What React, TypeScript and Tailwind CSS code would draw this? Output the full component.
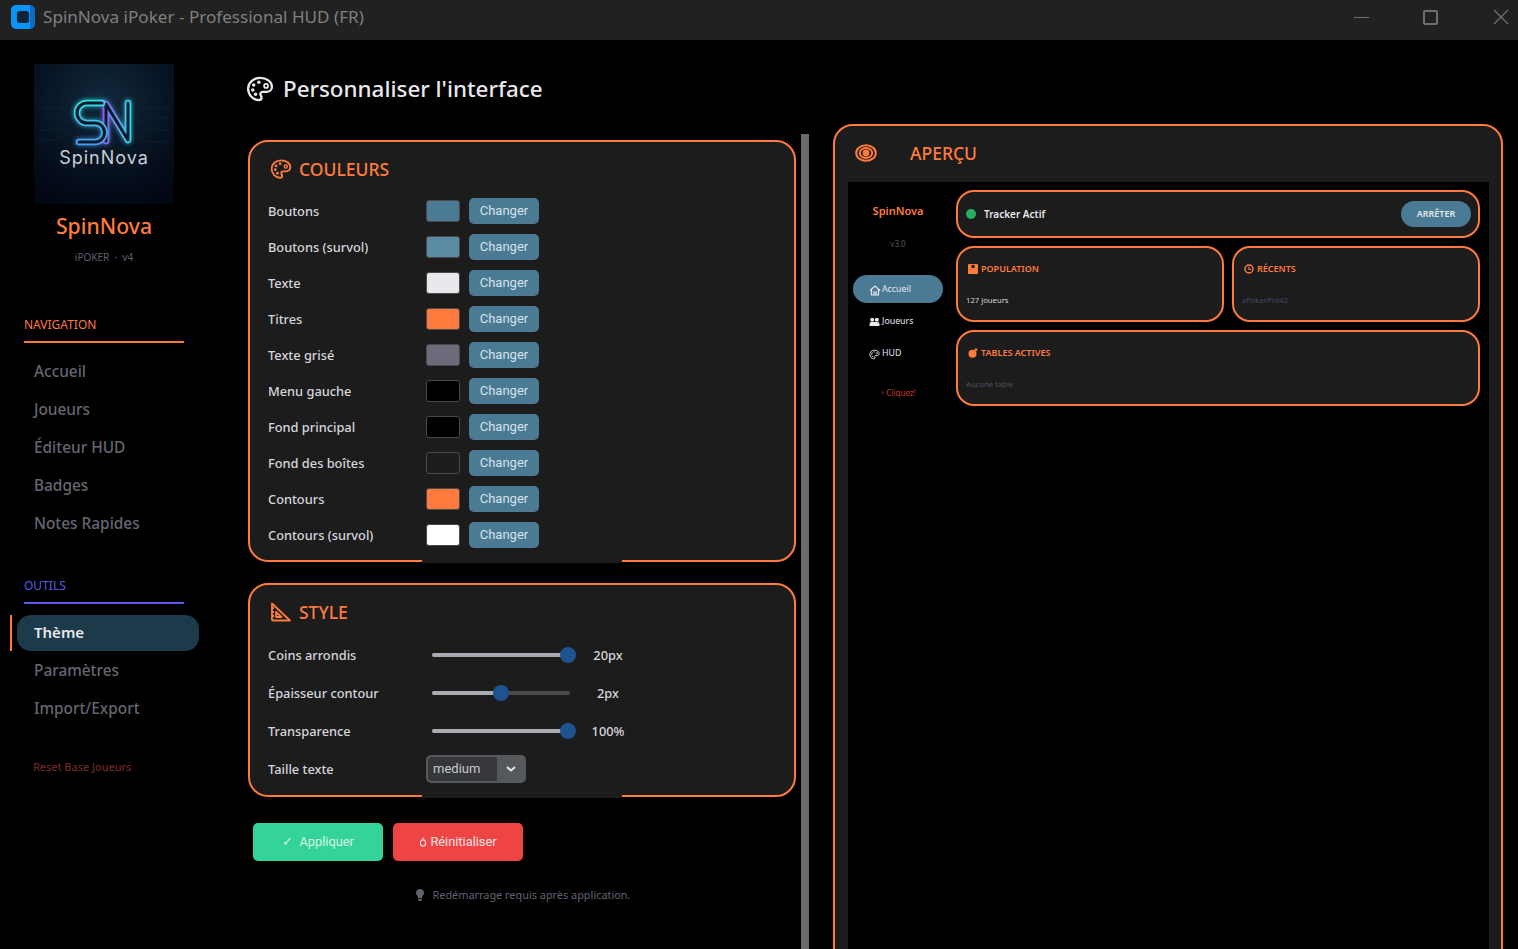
import React from 'react';

const colorRows = [
    { label: 'Boutons', swatch: 'bg-[#4a7a94]' },
    { label: 'Boutons (survol)', swatch: 'bg-[#5a8aa4]' },
    { label: 'Texte', swatch: 'bg-[#e8e8ec]' },
    { label: 'Titres', swatch: 'bg-[#ff7b3d]' },
    { label: 'Texte grisé', swatch: 'bg-[#6b6b7b]' },
    { label: 'Menu gauche', swatch: 'bg-[#000000]' },
    { label: 'Fond principal', swatch: 'bg-[#000000]' },
    { label: 'Fond des boîtes', swatch: 'bg-[#1c1c1c]' },
    { label: 'Contours', swatch: 'bg-[#ff7b3d]' },
    { label: 'Contours (survol)', swatch: 'bg-[#ffffff]' },
];

function PaletteIcon({ size, color, width = 2 }: { size: number; color: string; width?: number }) {
    return (
        <svg width={size} height={size} viewBox="0 0 24 24" fill="none" stroke={color} strokeWidth={width} className="shrink-0">
            <path d="M12 2.5C6.4 2.5 1.8 6.6 1.8 11.8S6.2 21.5 11 21.5c1.5 0 2.3-.9 2.3-2 0-1.5-1-2-1-3.2 0-1 .8-1.8 2-1.8h3.2c2.8 0 4.7-1.9 4.7-4.3 0-4.6-4.6-7.7-10.2-7.7z" />
            <circle cx="17.2" cy="9.4" r="1.7" strokeWidth={width * 0.75} />
            <circle cx="11" cy="6.2" r="1.5" fill={color} stroke="none" />
            <circle cx="6.6" cy="8.6" r="1.5" fill={color} stroke="none" />
            <circle cx="5.8" cy="12.8" r="1.5" fill={color} stroke="none" />
            <circle cx="8.2" cy="16.6" r="1.5" fill={color} stroke="none" />
        </svg>
    );
}

function Logo() {
    return (
        <svg width="140" height="140" viewBox="0 0 140 140" className="block">
            <defs>
                <radialGradient id="logoBg" cx="50%" cy="25%" r="80%">
                    <stop offset="0%" stopColor="#10293c" />
                    <stop offset="55%" stopColor="#081423" />
                    <stop offset="100%" stopColor="#020713" />
                </radialGradient>
                <linearGradient id="tubeS" gradientUnits="userSpaceOnUse" x1="0" y1="36" x2="0" y2="80">
                    <stop offset="0%" stopColor="#2fe6e0" />
                    <stop offset="100%" stopColor="#4a9cf5" />
                </linearGradient>
                <linearGradient id="tubeN" gradientUnits="userSpaceOnUse" x1="70" y1="0" x2="96" y2="0">
                    <stop offset="0%" stopColor="#8a62f0" />
                    <stop offset="100%" stopColor="#2fd8ea" />
                </linearGradient>
                <filter id="glow" x="-30%" y="-30%" width="160%" height="160%">
                    <feGaussianBlur stdDeviation="2.2" />
                </filter>
            </defs>
            <rect width="140" height="140" fill="url(#logoBg)" />
            <g stroke="#143040" strokeWidth="0.6" fill="none" opacity="0.7">
                <path d="M4 44h24l8 8h2M8 54h20l6 6h2M6 66h30M4 76h22l8-6h2M136 44h-24l-8 8h-2M134 54h-22l-6 6h-2M136 66h-32M134 78h-22l-8-6h-2" />
            </g>
            <g fill="none" strokeLinecap="round" strokeLinejoin="round">
                <path d="M72 77V40L94 76V39" stroke="url(#tubeN)" strokeWidth="8" filter="url(#glow)" opacity="0.6" />
                <path d="M68 39H53a10 10 0 0 0 0 20h8a9.5 9.5 0 0 1 0 19H45" stroke="url(#tubeS)" strokeWidth="8" filter="url(#glow)" opacity="0.6" />
                <path d="M72 77V40L94 76V39" stroke="url(#tubeN)" strokeWidth="6.6" />
                <path d="M72 77V40L94 76V39" stroke="#0a1a2c" strokeWidth="3" />
                <path d="M68 39H53a10 10 0 0 0 0 20h8a9.5 9.5 0 0 1 0 19H45" stroke="url(#tubeS)" strokeWidth="6.6" />
                <path d="M68 39H53a10 10 0 0 0 0 20h8a9.5 9.5 0 0 1 0 19H45" stroke="#0a1a2c" strokeWidth="3" />
            </g>
            <text x="70" y="100" textAnchor="middle" fill="#c9ced6" fontSize="18" fontWeight="400" letterSpacing="1" fontFamily="Inter, sans-serif">
                SpinNova
            </text>
        </svg>
    );
}

function TitleBar() {
    return (
        <div className="flex h-10 shrink-0 items-center bg-[#212121] pb-[6px]">
            <div className="ml-[11px] flex h-6 w-6 items-center justify-center rounded-[5px] bg-[linear-gradient(90deg,#0a94f5_78%,#0a6cc8_78%)]">
                <div className="mr-[1px] h-[12px] w-[12px] rounded-[3px] bg-[#0f2238]"></div>
            </div>
            <span className="ml-2 text-[17.1px] text-[#7f7f7f]">SpinNova iPoker - Professional HUD (FR)</span>
            <div className="ml-auto flex items-center">
                <div className="mr-[54px] h-px w-[15px] bg-[#6e6e6e]"></div>
                <div className="mr-[55px] h-[15px] w-[15px] rounded-[2px] border-2 border-[#6e6e6e]"></div>
                <svg width="16" height="16" viewBox="0 0 16 16" className="mr-[9px]">
                    <path d="M1 1l14 14M15 1L1 15" stroke="#6e6e6e" strokeWidth="1.3" />
                </svg>
            </div>
        </div>
    );
}

function NavItem({ label, active }: { label: string; active?: boolean }) {
    if (active) {
        return (
            <div className="relative ml-[17px] flex h-9 w-[182px] items-center rounded-[14px] bg-[#1c3a4a] pb-[2px] pl-[17px] text-[15px] font-semibold text-[#e8e8ec]">
                <div className="absolute -left-[7px] top-0 h-9 w-[2px] bg-[#ff7b3d]"></div>
                {label}
            </div>
        );
    }
    return <div className="flex h-9 items-center pl-[34px] text-[15.4px] font-medium text-[#666672]">{label}</div>;
}

function Sidebar() {
    return (
        <div className="flex w-[222px] shrink-0 flex-col">
            <div className="ml-[34px] mt-6 w-[140px]">
                <Logo />
            </div>
            <div className="ml-[34px] mt-[8px] w-[140px] text-center text-[21.2px] font-medium leading-7 text-[#ff7b3d]">SpinNova</div>
            <div className="ml-[34px] mt-[9px] w-[140px] text-center text-[10px] leading-4 text-[#5c6170]">iPOKER &nbsp;·&nbsp; v4</div>

            <div className="ml-6 mt-[52px] w-40 border-b-2 border-[#ff7b3d] pb-2 text-xs leading-4 text-[#ff7b3d]">NAVIGATION</div>
            <div className="mt-[11px] flex flex-col gap-[2px]">
                {['Accueil', 'Joueurs', 'Éditeur HUD', 'Badges', 'Notes Rapides'].map((item) => (
                    <NavItem key={item} label={item} />
                ))}
            </div>

            <div className="ml-6 mt-[36px] w-40 border-b-2 border-[#5b5be6] pb-2 text-xs leading-4 text-[#5b5be6]">OUTILS</div>
            <div className="mt-[11px] flex flex-col gap-[2px]">
                <NavItem label="Thème" active />
                <NavItem label="Paramètres" />
                <NavItem label="Import/Export" />
            </div>
            <div className="ml-[33px] mt-[32px] text-[11px] leading-4 text-[#7a2e2a]">Reset Base Joueurs</div>
        </div>
    );
}

function ColorRow({ label, swatch }: { label: string; swatch: string }) {
    return (
        <div className="flex h-[26px] items-center">
            <div className="w-[158px] pt-[2px] text-[12.8px] font-medium text-[#d6d6dc]">{label}</div>
            <div className={`h-[22px] w-[34px] rounded-[3px] border border-[#4a4a4a] ${swatch}`}></div>
            <button className="ml-[9px] h-[26px] w-[70px] rounded-[5px] bg-[#4a7a94] font-['Roboto'] text-[13px] text-[#d6e2e8]">Changer</button>
        </div>
    );
}

function Notch() {
    // bande sans contour en bas des boites
    return <div className="absolute -bottom-[3px] left-[172px] h-[5px] w-[200px] bg-[#1c1c1c]"></div>;
}

function StyleIcon() {
    return (
        <svg width="22" height="22" viewBox="0 0 22 22" fill="none" stroke="#ff7b3d" strokeWidth="1.8" strokeLinejoin="round">
            <path d="M2 2.5l18 17H3a1 1 0 0 1-1-1z" />
            <path d="M6 11l5.5 5H6z" />
            <path d="M2 7h2M2 11h2M2 15h2" />
        </svg>
    );
}

function SliderRow({ label, value, percent }: { label: string; value: string; percent: number }) {
    return (
        <div className="flex h-7 items-center">
            <div className="w-[164px] pt-[2px] text-[12.8px] font-medium text-[#d6d6dc]">{label}</div>
            <div className="relative h-[4px] w-[138px] rounded-full bg-[#4a4a4a]">
                <div className="h-full rounded-full bg-[#a8abb0]" style={{ width: `${percent}%` }}></div>
                <div className="absolute -top-[6px] h-4 w-4 rounded-full bg-[#1f5390]" style={{ left: `${(percent / 100) * 134 - 6}px` }}></div>
            </div>
            <div className="ml-[18px] w-[40px] pt-[2px] text-center text-[12.8px] font-medium text-[#d6d6dc]">{value}</div>
        </div>
    );
}

function LeftColumn() {
    return (
        <div className="w-[555px] shrink-0 pt-[35px]">
            <div className="flex h-7 items-center text-[#e8e8ec]">
                <PaletteIcon size={28} color="#e8e8ec" />
                <span className="ml-[9px] text-[22.4px] font-medium">Personnaliser l'interface</span>
            </div>

            <div className="relative ml-[2px] mt-[37px] h-[422px] w-[548px] rounded-[20px] border-2 border-[#ff7b3d] bg-[#1c1c1c] pl-[18px] pt-[15px]">
                <div className="flex h-6 items-center gap-[6px] pl-[2px] text-[17.5px] font-medium text-[#ff7b3d]">
                    <PaletteIcon size={22} color="#ff7b3d" />
                    <span className="ml-[1px]">COULEURS</span>
                </div>
                <div className="mt-[17px] flex flex-col gap-[10px]">
                    {colorRows.map((row) => (
                        <ColorRow key={row.label} label={row.label} swatch={row.swatch} />
                    ))}
                </div>
                <Notch />
            </div>

            <div className="relative ml-[2px] mt-[21px] h-[214px] w-[548px] rounded-[20px] border-2 border-[#ff7b3d] bg-[#1c1c1c] pl-[18px] pt-[15px]">
                <div className="flex h-6 items-center gap-[7px] pl-[2px] text-[17.5px] font-medium text-[#ff7b3d]">
                    <StyleIcon />
                    <span>STYLE</span>
                </div>
                <div className="mt-[17px] flex flex-col gap-[10px]">
                    <SliderRow label="Coins arrondis" value="20px" percent={100} />
                    <SliderRow label="Épaisseur contour" value="2px" percent={50} />
                    <SliderRow label="Transparence" value="100%" percent={100} />
                    <div className="flex h-7 items-center">
                        <div className="w-[158px] pt-[2px] text-[12.8px] font-medium text-[#d6d6dc]">Taille texte</div>
                        <div className="flex h-7 w-[100px] overflow-hidden rounded-[5px] border-2 border-[#55595c] bg-[#55595c]">
                            <div className="flex-1 rounded-l-[3px] bg-[#35373a] pl-[5px] font-['Roboto'] text-[13px] leading-6 text-[#c8c8ce]">medium</div>
                            <div className="flex w-[27px] items-center justify-center">
                                <svg width="10" height="6" viewBox="0 0 10 6" fill="none">
                                    <path d="M1 1l4 3.5L9 1" stroke="#e4e4e4" strokeWidth="2" />
                                </svg>
                            </div>
                        </div>
                    </div>
                </div>
                <Notch />
            </div>

            <div className="ml-[7px] mt-[26px] flex gap-[10px] font-['Roboto'] text-[12.8px]">
                <button className="h-[38px] w-[130px] rounded-[5px] bg-[#34d399] text-[#d6f5e8]">✓&nbsp; Appliquer</button>
                <button className="flex h-[38px] w-[130px] items-center justify-center gap-[3px] rounded-[5px] bg-[#ef4444] text-[#fde4e4]">
                    <svg width="8" height="10" viewBox="0 0 8 10" fill="none" stroke="#fde4e4" strokeWidth="1.1">
                        <ellipse cx="4" cy="6" rx="2.6" ry="3.2" />
                        <path d="M4 0.5v3" />
                    </svg>
                    Réinitialiser
                </button>
            </div>

            <div className="ml-[1px] mt-[26px] flex w-[552px] items-center justify-center gap-[7px] text-[10.9px] text-[#5f6470]">
                <svg width="10" height="12" viewBox="0 0 10 12" fill="#5f6470">
                    <path d="M5 0a4 4 0 0 0-2.2 7.3V9h4.4V7.3A4 4 0 0 0 5 0zM3 9.8h4V11l-1 1H4l-1-1z" />
                </svg>
                <span>Redémarrage requis après application.</span>
            </div>
        </div>
    );
}

function MiniCard({ title, icon, text, textColor, className }: { title: string; icon: React.ReactNode; text: string; textColor: string; className: string }) {
    return (
        <div className={`h-[76px] rounded-[18px] border-2 border-[#ff7b3d] bg-[#1c1c1c] pl-2 ${className}`}>
            <div className="mt-[14px] flex h-[14px] items-center gap-[3px] pl-[2px] text-[9px] font-semibold text-[#ff7b3d]">
                {icon}
                <span>{title}</span>
            </div>
            <div className={`mt-[18px] text-[7.7px] leading-3 ${textColor}`}>{text}</div>
        </div>
    );
}

function Preview() {
    const box = (
        <svg width="10" height="10" viewBox="0 0 10 10" fill="#ff7b3d">
            <path d="M0 1a1 1 0 0 1 1-1h8a1 1 0 0 1 1 1v8a1 1 0 0 1-1 1H1a1 1 0 0 1-1-1zM3.5 1v3h3V1z" fillRule="evenodd" />
        </svg>
    );
    const clock = (
        <svg width="10" height="10" viewBox="0 0 10 10" fill="none" stroke="#ff7b3d" strokeWidth="1.5">
            <circle cx="5" cy="5" r="4" />
            <path d="M5 2.5V5.5H7" strokeWidth="1.1" />
        </svg>
    );
    const blob = (
        <svg width="10" height="10" viewBox="0 0 10 10" fill="#ff7b3d">
            <circle cx="4.5" cy="5.8" r="4" />
            <circle cx="8" cy="1.8" r="1.4" />
        </svg>
    );
    return (
        <div className="ml-6 mt-[84px] h-[900px] w-[670px] shrink-0 rounded-[20px] border-2 border-[#ff7b3d] bg-[#1c1c1c]">
            <div className="flex h-[56px] items-center pb-[2px] pl-5 text-[#ff7b3d]">
                <svg width="22" height="18" viewBox="0 0 22 18" fill="none" stroke="#ff7b3d" strokeWidth="2">
                    <ellipse cx="11" cy="9" rx="9.8" ry="7.8" />
                    <ellipse cx="11" cy="9" rx="6.2" ry="5" />
                    <circle cx="11" cy="9" r="2.4" fill="#ff7b3d" />
                </svg>
                <span className="ml-[33px] text-[17.5px] font-medium">APERÇU</span>
            </div>
            <div className="ml-[13px] flex h-[800px] w-[641px] bg-black">
                <div className="w-[108px] shrink-0 pl-[5px]">
                    <div className="mt-[21px] w-[90px] text-center text-[11px] font-semibold leading-4 text-[#ff7b3d]">SpinNova</div>
                    <div className="mt-[19px] w-[90px] text-center text-[8px] leading-3 text-[#55555f]">v3.0</div>
                    <div className="mt-[25px] flex h-7 w-[90px] items-center gap-[1px] rounded-[14px] bg-[#4a7a94] pl-4 pt-[2px] text-[8.8px] text-[#e8e8ec]">
                        <svg width="12" height="11" viewBox="0 0 12 11" fill="none" stroke="#e8e8ec" strokeWidth="1.2">
                            <path d="M1 5.5L6 1l5 4.5M2.5 4.5V10h7V4.5M5 10V7h2v3" />
                        </svg>
                        Accueil
                    </div>
                    <div className="mt-1 flex h-7 items-center gap-[2px] pl-4 pt-[2px] text-[8.8px] text-[#e8e8ec]">
                        <svg width="11" height="10" viewBox="0 0 11 10" fill="#e8e8ec">
                            <circle cx="3.2" cy="2.8" r="2" />
                            <circle cx="7.8" cy="2.8" r="2" />
                            <path d="M0.5 9V7a2 2 0 0 1 2-2h6a2 2 0 0 1 2 2v2z" />
                        </svg>
                        Joueurs
                    </div>
                    <div className="mt-1 flex h-7 items-center gap-[2px] pl-4 pt-[2px] text-[8.8px] text-[#e8e8ec]">
                        <PaletteIcon size={11} color="#e8e8ec" />
                        HUD
                    </div>
                    <div className="mt-[20px] w-[90px] text-center text-[8px] leading-3 text-[#c0392b]">↑ Cliquez!</div>
                </div>
                <div className="flex w-[524px] flex-col gap-2 pt-2">
                    <div className="flex h-12 items-center rounded-[18px] border-2 border-[#ff7b3d] bg-[#1c1c1c] pl-2">
                        <div className="h-[10px] w-[10px] rounded-full bg-[#27ae60]"></div>
                        <span className="ml-2 text-[10px] font-semibold text-[#e8e8ec]">Tracker Actif</span>
                        <button className="ml-auto mr-[7px] h-[26px] w-[70px] rounded-[13px] bg-[#4a7a94] text-[9px] font-semibold text-[#e0e8ec]">ARRÊTER</button>
                    </div>
                    <div className="flex gap-2">
                        <MiniCard className="w-[268px]" title="POPULATION" icon={box} text="127 joueurs" textColor="text-[#d6d6dc]" />
                        <MiniCard className="w-[248px]" title="RÉCENTS" icon={clock} text="xPokerPro42" textColor="text-[#3f4a66]" />
                    </div>
                    <MiniCard className="w-full" title="TABLES ACTIVES" icon={blob} text="Aucune table" textColor="text-[#4f5260]" />
                </div>
            </div>
        </div>
    );
}

export default function App() {
    return (
        <div className="flex h-[949px] w-[1518px] flex-col overflow-hidden bg-black font-['Noto_Sans',sans-serif]">
            <TitleBar />
            <div className="flex flex-1 overflow-hidden">
                <Sidebar />
                <div className="flex">
                    <div className="pl-[24px]">
                        <LeftColumn />
                    </div>
                    <div className="mt-[94px] h-[900px] w-2 shrink-0 bg-[#6b6b6b]"></div>
                    <Preview />
                </div>
            </div>
        </div>
    );
}
